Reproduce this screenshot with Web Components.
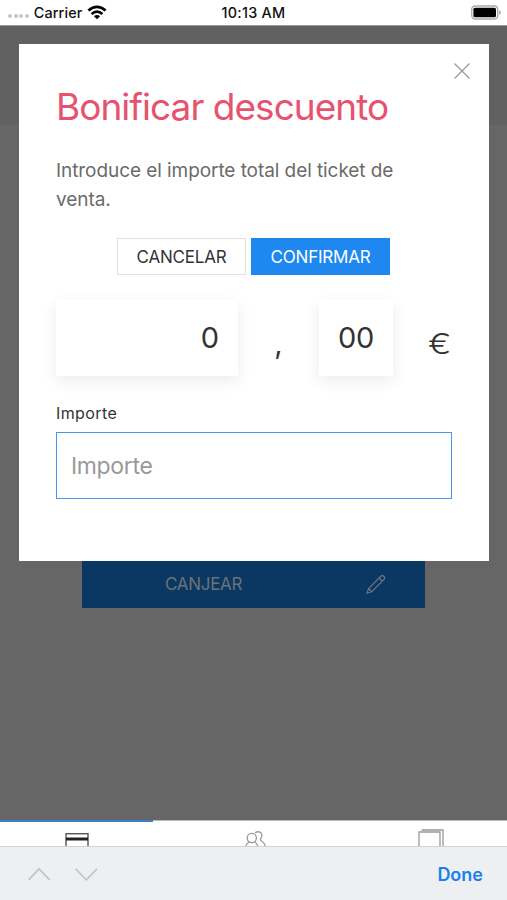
<!DOCTYPE html>
<html lang="es"><head><meta charset="utf-8"><title>Bonificar descuento</title>
<style>
html,body{margin:0;height:100%;overflow:hidden}
body{font-family:Inter,"Liberation Sans",sans-serif;color:#333}
</style></head><body>
<app-screen>
  <status-bar slot="status"></status-bar>
  <redeem-button slot="page">CANJEAR</redeem-button>
  <discount-dialog slot="dialog" heading="Bonificar descuento">
    <span slot="text">Introduce el importe total del ticket de venta.</span>
    <action-button slot="actions">CANCELAR</action-button>
    <action-button slot="actions" primary>CONFIRMAR</action-button>
    <amount-row slot="body"></amount-row>
    <text-field slot="body" label="Importe"></text-field>
  </discount-dialog>
  <tab-bar slot="footer"></tab-bar>
  <keyboard-bar slot="footer">Done</keyboard-bar>
</app-screen>
<script>
const define=(name,html,setup)=>customElements.define(name,class extends HTMLElement{
  constructor(){super();this.attachShadow({mode:'open'}).innerHTML=html;}
  connectedCallback(){if(setup)setup(this,this.shadowRoot);}
});
define('app-screen',`<style>
:host{display:flex;flex-direction:column;width:507px;height:900px;overflow:hidden;background:#666}
main{flex:1;position:relative;min-height:0;background:linear-gradient(#616161 99px,#666 99px)}
.page{display:flex;justify-content:center;padding-top:534px}
.dialog{position:absolute;inset:17.5px 18px auto 19px}
</style><slot name="status"></slot><main><div class="page"><slot name="page"></slot></div><div class="dialog"><slot name="dialog"></slot></div></main><slot name="footer"></slot>`);

define('status-bar',`<style>
:host{display:grid;grid-template-columns:1fr auto 1fr;align-items:center;background:#fff;color:#111;font-size:14.4px;font-weight:500;border-bottom:1px solid #999;box-sizing:border-box;height:26px}
.left{display:flex;align-items:center;padding-left:8px}
.dots{display:flex;gap:1.6px;margin:7px 5px 0 0}.dots i{width:4px;height:4px;border-radius:50%;background:#c6c6c6}
.wifi{margin-left:5px}.bat{justify-self:end;margin-right:6px}svg{display:block}
.name{letter-spacing:.1px}.time{letter-spacing:.25px}
</style><div class="left"><span class="dots"><i></i><i></i><i></i><i></i></span><span class="name">Carrier</span>
<svg class="wifi" width="20" height="15" viewBox="0 0 20 15"><g fill="none" stroke="#000" stroke-width="2.7"><path d="M1.4 5.6Q10-2 18.6 5.6"/><path d="M4.6 9Q10 4.2 15.4 9"/></g><path d="M6.9 11.2Q10 8.8 13.1 11.2L10 14.3Z"/></svg></div>
<span class="time">10:13 AM</span>
<svg class="bat" width="30" height="15" viewBox="0 0 30 15"><rect x=".7" y="1" width="26" height="13" rx="3.4" fill="#fff" stroke="#aaa" stroke-width="1.3"/><rect x="2.4" y="2.7" width="22.6" height="9.6" rx="1.6"/><path d="M28 5.2q1.8.6 1.8 2.3T28 9.8z" fill="#aaa"/></svg>`);

define('redeem-button',`<style>
:host{display:grid;grid-template-columns:1fr auto;align-items:center;box-sizing:border-box;width:343px;height:48px;padding:0 39px 0 83px;background:#0b3863;color:#6b7278;font-size:17px;letter-spacing:-.3px}
svg{display:block}
</style><span><slot></slot></span><svg width="20" height="20" viewBox="0 0 20 20" fill="none" stroke="#71777c" stroke-width="1.2" stroke-linejoin="round"><path d="M1 19.3L2.6 14.6L14.4 2.6Q16.2.8 17.8 2.3T17.8 5.7L5.8 17.7ZM13 4L16.3 7.2M2.6 14.6L5.8 17.7"/></svg>`);

define('discount-dialog',`<style>
:host{display:block;position:relative;box-sizing:border-box;height:517px;padding:42px 37px 0;background:#fff}
h1{margin:0;font-size:37px;line-height:42px;font-weight:400;color:#e7536f;letter-spacing:-.97px;white-space:nowrap}
p{margin:28px 40px 0 0;font-size:19px;line-height:29px;color:#6b6b6b;letter-spacing:-.07px}
.actions{display:flex;justify-content:center;gap:5px;margin:24px 1px 0 0}
.close{position:absolute;right:19px;top:19px}
</style><svg class="close" width="16" height="16" viewBox="0 0 16 16" stroke="#999" stroke-width="1.3"><path d="M.5.5L15.5 15.5M15.5.5L.5 15.5"/></svg>
<h1></h1><p><slot name="text"></slot></p><div class="actions"><slot name="actions"></slot></div><slot name="body"></slot>`,
(e,r)=>{r.querySelector('h1').textContent=e.getAttribute('heading');});

define('action-button',`<style>
:host{display:flex;align-items:center;justify-content:center;box-sizing:border-box;width:129px;height:37px;padding-top:1px;border:1px solid #e2e2e2;background:#fff;color:#333;font-size:17px;letter-spacing:-.2px}
:host([primary]){width:139px;background:#1e87f0;border-color:#1e87f0;color:#fff}
</style><span><slot></slot></span>`);

define('amount-row',`<style>
:host{display:grid;grid-template-columns:182px 81px 74px 1fr;align-items:center;height:76px;margin-top:25px;font-size:29px;color:#333}
.card{height:76px;display:flex;align-items:center;box-sizing:border-box;background:#fff;box-shadow:0 5px 15px rgba(0,0,0,.08)}
.euros{justify-content:flex-end;padding-right:19px}.cents{justify-content:center;letter-spacing:-.4px}
.comma{text-align:center;padding-top:12px}.unit{justify-self:end;padding-top:12px;font-weight:300;transform:scaleX(1.2);transform-origin:right}
</style><div class="card euros">0</div><span class="comma">,</span><div class="card cents">00</div><span class="unit">€</span>`);

define('text-field',`<style>
:host{display:block;margin-top:26px}
label{display:block;font-size:16px;line-height:22px;color:#333;letter-spacing:.4px}
input{display:block;box-sizing:border-box;width:396px;height:67px;margin-top:8px;padding:2px 14px 0;border:1px solid #4997e8;outline:0;border-radius:0;background:#fff;font:23px Inter,"Liberation Sans",sans-serif;letter-spacing:-.35px}
input::placeholder{color:#999;opacity:1}
</style><label for="f"></label><input id="f">`,
(e,r)=>{const t=e.getAttribute('label');r.querySelector('label').textContent=t;r.querySelector('input').placeholder=t;});

define('tab-bar',`<style>
:host{display:grid;grid-template-columns:153px 1fr 153px;height:26px;overflow:hidden;background:#fff}
div{border-top:1px solid #bbb;display:flex;justify-content:center;overflow:hidden}
.on{border-top:2px solid #3e7fc8}
.people{padding-left:4px}
svg{display:block;flex:none}
</style><div class="on"><svg width="24" height="26" viewBox="0 0 24 26" fill="none" stroke="#555" stroke-width="1.4"><rect x="1" y="11.7" width="22" height="20"/><path d="M1 17H23" stroke="#222" stroke-width="3"/></svg></div>
<div class="people"><svg width="24" height="26" viewBox="0 0 24 26" fill="none" stroke="#999" stroke-width="1.3"><circle cx="7.8" cy="17" r="4.6"/><path d="M1.5 27Q2 22.5 5 21M10.6 21Q13.6 22.5 14 27M11 11.8Q14 9.8 16.6 11.5T16.6 18Q16 19.2 17.5 20Q21 22 21.5 27"/></svg></div>
<div><svg width="26" height="26" viewBox="0 0 26 26" fill="none" stroke="#999" stroke-width="1.3"><path d="M1 28V11H22V28M3.5 9H25V28"/></svg></div>`);

define('keyboard-bar',`<style>
:host{display:flex;justify-content:space-between;align-items:center;box-sizing:border-box;height:54px;padding:1px 24px 0 28px;border-top:1px solid #d2d2d2;background:#eeeff0;color:#1a7fec;font-size:18px;font-weight:600}
svg{display:block}
</style><svg width="70" height="14" viewBox="0 0 70 14" fill="none" stroke="#c3c4c6" stroke-width="1.7"><path d="M.7 12.8L11 1.8L21.6 12.8M47.7 1.8L58.3 12.8L69 1.8"/></svg><span><slot></slot></span>`);
</script></body></html>
